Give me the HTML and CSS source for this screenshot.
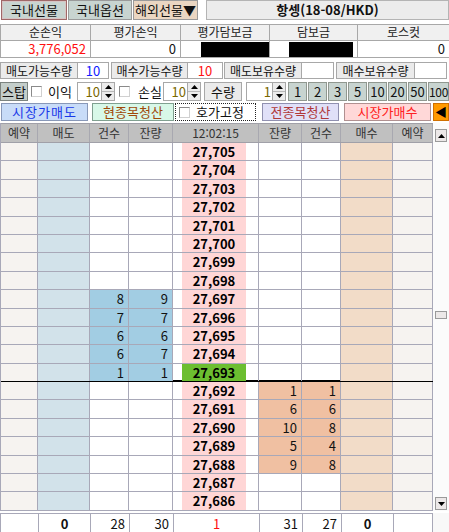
FILE: index.html
```html
<!DOCTYPE html>
<html lang="ko">
<head>
<meta charset="utf-8">
<title>항셍 호가</title>
<link rel="stylesheet" href="styles.css">
</head>
<body>
<div class="app">
  <div class="tabs">
    <div class="tab tab-active w66">국내선물</div>
    <div class="tab w64">국내옵션</div>
    <div class="tab tab-ov w65">해외선물▼</div>
    <div class="title">항셍(18-08/HKD)</div>
  </div>

  <div class="pl">
    <div class="ph">순손익</div>
    <div class="ph">평가손익</div>
    <div class="ph">평가담보금</div>
    <div class="ph">담보금</div>
    <div class="ph">로스컷</div>
    <div class="pv red">3,776,052</div>
    <div class="pv">0</div>
    <div class="pv"><div class="mask m1"></div></div>
    <div class="pv"><div class="mask m2"></div></div>
    <div class="pv">0</div>
  </div>

  <div class="qty">
    <div class="lbl w78">매도가능수량</div>
    <div class="val w31 blue">10</div>
    <div class="lbl w77 ml2">매수가능수량</div>
    <div class="val w35 red">10</div>
    <div class="lbl w78 ml1">매도보유수량</div>
    <div class="val w32"></div>
    <div class="lbl w79 ml2">매수보유수량</div>
    <div class="val w32"></div>
  </div>

  <div class="stop">
    <div class="stopbtn">스탑</div>
    <div class="chk ml3"></div>
    <div class="txt t-ik">이익</div>
    <div class="spin">
      <div class="spin-in">10</div>
      <div class="spin-btn">
        <div class="arr"><svg width="7" height="4" viewBox="0 0 7 4"><polygon points="0,4 7,4 3.5,0" fill="#000"/></svg></div>
        <div class="arr"><svg width="7" height="4" viewBox="0 0 7 4"><polygon points="0,0 7,0 3.5,4" fill="#000"/></svg></div>
      </div>
    </div>
    <div class="chk ml4"></div>
    <div class="txt t-ss">손실</div>
    <div class="spin">
      <div class="spin-in">10</div>
      <div class="spin-btn">
        <div class="arr"><svg width="7" height="4" viewBox="0 0 7 4"><polygon points="0,4 7,4 3.5,0" fill="#000"/></svg></div>
        <div class="arr"><svg width="7" height="4" viewBox="0 0 7 4"><polygon points="0,0 7,0 3.5,4" fill="#000"/></svg></div>
      </div>
    </div>
    <div class="lbl w38 ml3">수량</div>
    <div class="spin ml4 sp40">
      <div class="spin-in">1</div>
      <div class="spin-btn">
        <div class="arr"><svg width="7" height="4" viewBox="0 0 7 4"><polygon points="0,4 7,4 3.5,0" fill="#000"/></svg></div>
        <div class="arr"><svg width="7" height="4" viewBox="0 0 7 4"><polygon points="0,0 7,0 3.5,4" fill="#000"/></svg></div>
      </div>
    </div>
    <div class="nbs">
      <div class="nb">1</div>
      <div class="nb">2</div>
      <div class="nb">3</div>
      <div class="nb">5</div>
      <div class="nb">10</div>
      <div class="nb">20</div>
      <div class="nb">50</div>
      <div class="nb nb-last">100</div>
    </div>
  </div>

  <div class="acts">
    <div class="btn b-msell">시장가매도</div>
    <div class="btn b-cur">현종목청산</div>
    <div class="btn b-fix"><div class="chk"></div><span>호가고정</span></div>
    <div class="btn b-all">전종목청산</div>
    <div class="btn b-mbuy">시장가매수</div>
    <div class="btn b-arrow">◀</div>
  </div>

  <div class="board">
    <div class="grid">
      <div class="row hdr">
        <div class="c">예약</div><div class="c">매도</div><div class="c">건수</div><div class="c">잔량</div><div class="c">12:02:15</div><div class="c">잔량</div><div class="c">건수</div><div class="c">매수</div><div class="c">예약</div>
      </div>
      <div class="row"><div class="c rs"></div><div class="c sd"></div><div class="c n"></div><div class="c n"></div><div class="c pc"><div class="px">27,705</div></div><div class="c n"></div><div class="c n"></div><div class="c bd"></div><div class="c rs"></div></div>
      <div class="row"><div class="c rs"></div><div class="c sd"></div><div class="c n"></div><div class="c n"></div><div class="c pc"><div class="px">27,704</div></div><div class="c n"></div><div class="c n"></div><div class="c bd"></div><div class="c rs"></div></div>
      <div class="row"><div class="c rs"></div><div class="c sd"></div><div class="c n"></div><div class="c n"></div><div class="c pc"><div class="px">27,703</div></div><div class="c n"></div><div class="c n"></div><div class="c bd"></div><div class="c rs"></div></div>
      <div class="row"><div class="c rs"></div><div class="c sd"></div><div class="c n"></div><div class="c n"></div><div class="c pc"><div class="px">27,702</div></div><div class="c n"></div><div class="c n"></div><div class="c bd"></div><div class="c rs"></div></div>
      <div class="row"><div class="c rs"></div><div class="c sd"></div><div class="c n"></div><div class="c n"></div><div class="c pc"><div class="px">27,701</div></div><div class="c n"></div><div class="c n"></div><div class="c bd"></div><div class="c rs"></div></div>
      <div class="row"><div class="c rs"></div><div class="c sd"></div><div class="c n"></div><div class="c n"></div><div class="c pc"><div class="px">27,700</div></div><div class="c n"></div><div class="c n"></div><div class="c bd"></div><div class="c rs"></div></div>
      <div class="row"><div class="c rs"></div><div class="c sd"></div><div class="c n"></div><div class="c n"></div><div class="c pc"><div class="px">27,699</div></div><div class="c n"></div><div class="c n"></div><div class="c bd"></div><div class="c rs"></div></div>
      <div class="row"><div class="c rs"></div><div class="c sd"></div><div class="c n"></div><div class="c n"></div><div class="c pc"><div class="px">27,698</div></div><div class="c n"></div><div class="c n"></div><div class="c bd"></div><div class="c rs"></div></div>
      <div class="row"><div class="c rs"></div><div class="c sd"></div><div class="c n hs">8</div><div class="c n hs">9</div><div class="c pc"><div class="px">27,697</div></div><div class="c n"></div><div class="c n"></div><div class="c bd"></div><div class="c rs"></div></div>
      <div class="row"><div class="c rs"></div><div class="c sd"></div><div class="c n hs">7</div><div class="c n hs">7</div><div class="c pc"><div class="px">27,696</div></div><div class="c n"></div><div class="c n"></div><div class="c bd"></div><div class="c rs"></div></div>
      <div class="row"><div class="c rs"></div><div class="c sd"></div><div class="c n hs">6</div><div class="c n hs">6</div><div class="c pc"><div class="px">27,695</div></div><div class="c n"></div><div class="c n"></div><div class="c bd"></div><div class="c rs"></div></div>
      <div class="row"><div class="c rs"></div><div class="c sd"></div><div class="c n hs">6</div><div class="c n hs">7</div><div class="c pc"><div class="px">27,694</div></div><div class="c n"></div><div class="c n"></div><div class="c bd"></div><div class="c rs"></div></div>
      <div class="row mid"><div class="c rs"></div><div class="c sd"></div><div class="c n hs">1</div><div class="c n hs">1</div><div class="c pc"><div class="px cur">27,693</div></div><div class="c n"></div><div class="c n"></div><div class="c bd"></div><div class="c rs"></div></div>
      <div class="row"><div class="c rs"></div><div class="c sd"></div><div class="c n"></div><div class="c n"></div><div class="c pc"><div class="px">27,692</div></div><div class="c n hb">1</div><div class="c n hb">1</div><div class="c bd"></div><div class="c rs"></div></div>
      <div class="row"><div class="c rs"></div><div class="c sd"></div><div class="c n"></div><div class="c n"></div><div class="c pc"><div class="px">27,691</div></div><div class="c n hb">6</div><div class="c n hb">6</div><div class="c bd"></div><div class="c rs"></div></div>
      <div class="row"><div class="c rs"></div><div class="c sd"></div><div class="c n"></div><div class="c n"></div><div class="c pc"><div class="px">27,690</div></div><div class="c n hb">10</div><div class="c n hb">8</div><div class="c bd"></div><div class="c rs"></div></div>
      <div class="row"><div class="c rs"></div><div class="c sd"></div><div class="c n"></div><div class="c n"></div><div class="c pc"><div class="px">27,689</div></div><div class="c n hb">5</div><div class="c n hb">4</div><div class="c bd"></div><div class="c rs"></div></div>
      <div class="row"><div class="c rs"></div><div class="c sd"></div><div class="c n"></div><div class="c n"></div><div class="c pc"><div class="px">27,688</div></div><div class="c n hb">9</div><div class="c n hb">8</div><div class="c bd"></div><div class="c rs"></div></div>
      <div class="row"><div class="c rs"></div><div class="c sd"></div><div class="c n"></div><div class="c n"></div><div class="c pc"><div class="px">27,687</div></div><div class="c n"></div><div class="c n"></div><div class="c bd"></div><div class="c rs"></div></div>
      <div class="row"><div class="c rs"></div><div class="c sd"></div><div class="c n"></div><div class="c n"></div><div class="c pc"><div class="px">27,686</div></div><div class="c n"></div><div class="c n"></div><div class="c bd"></div><div class="c rs"></div></div>
    </div>
    <div class="sb">
      <div class="sbtn sb-up"><svg width="7" height="4" viewBox="0 0 7 4"><polygon points="0,4 7,4 3.5,0" fill="#000"/></svg></div>
      <div class="thumb"></div>
      <div class="sbtn sb-dn"><svg width="7" height="4" viewBox="0 0 7 4"><polygon points="0,0 7,0 3.5,4" fill="#000"/></svg></div>
    </div>
  </div>

  <div class="foot">
    <div class="frow">
      <div class="f"></div>
      <div class="f ctr bold">0</div>
      <div class="f rt">28</div>
      <div class="f rt">30</div>
      <div class="f ctr red">1</div>
      <div class="f rt">31</div>
      <div class="f rt">27</div>
      <div class="f ctr bold">0</div>
      <div class="f"></div>
    </div>
    <div class="fpad"></div>
  </div>
</div>
</body>
</html>
```

FILE: styles.css
```css
* { box-sizing: border-box; }
body {
  margin: 0;
  font-family: "Noto Sans CJK KR", "Noto Sans", sans-serif;
  font-size: 12px;
  color: #111;
  background: #fff;
}
.app { width: 449px; height: 532px; overflow: hidden; }

/* tabs */
.tabs { display: flex; height: 20px; padding-left: 1px; }
.tab {
  height: 20px;
  border: 1px solid #9a9a9a;
  background: #c8d4d0;
  font-size: 13px;
  line-height: 17px;
  text-align: center;
  margin-right: 1px;
  color: #111;
}
.w66 { width: 66px; }
.w64 { width: 64px; }
.w65 { width: 65px; }
.tab-active { border-color: #a06868; box-shadow: inset 0 0 0 1px #d6c4c4; }
.tab-ov { background: #ead6c2; }
.title {
  flex: 1;
  margin-left: 7px;
  background: #ececec;
  border: 1px solid #b4b4b4;
  font-weight: bold;
  font-size: 13px;
  line-height: 17px;
  text-align: center;
  color: #111;
}

/* profit/loss */
.pl {
  margin-top: 4px;
  display: grid;
  grid-template-columns: 90px 90px 89px 88px 92px;
  grid-template-rows: 16px 17px;
  border-top: 1px solid #a8a8a8;
  border-left: 1px solid #a8a8a8;
}
.ph {
  background: #f0f0f0;
  border-right: 1px solid #a8a8a8;
  border-bottom: 1px solid #a8a8a8;
  text-align: center;
  line-height: 14px;
  color: #222;
}
.pv {
  background: #fff;
  border-right: 1px solid #a8a8a8;
  border-bottom: 1px solid #a8a8a8;
  text-align: right;
  padding-right: 4px;
  line-height: 16px;
  font-size: 13px;
  display: flex;
  justify-content: flex-end;
  align-items: center;
}
.mask { background: #000; height: 15px; }
.m1 { width: 68px; margin-right: -4px; }
.m2 { width: 64px; margin-right: 0; }
.red { color: #ff1010; }
.blue { color: #1020ff; }

/* quantities */
.qty { margin-top: 4px; display: flex; height: 17px; }
.lbl {
  background: #ebebeb;
  border: 1px solid #a8a8a8;
  text-align: center;
  line-height: 15px;
  color: #111;
}
.val {
  background: #fff;
  border: 1px solid #a8a8a8;
  border-left: none;
  text-align: center;
  line-height: 15px;
  font-size: 13px;
}
.w78 { width: 78px; }
.w77 { width: 77px; }
.w79 { width: 79px; }
.w31 { width: 31px; }
.w32 { width: 32px; }
.w35 { width: 35px; }
.w38 { width: 38px; }
.ml1 { margin-left: 1px; }
.ml2 { margin-left: 2px; }
.ml3 { margin-left: 3px; }
.ml4 { margin-left: 4px; }

/* stop row */
.stop { margin-top: 3px; display: flex; height: 19px; align-items: stretch; }
.stopbtn {
  width: 28px;
  background: #c4ceca;
  border: 1px solid #7c8480;
  text-align: center;
  line-height: 17px;
  font-size: 13px;
}
.chk {
  width: 11px;
  height: 11px;
  align-self: center;
  background: #fff;
  border: 1px solid #8a8a8a;
  border-right-color: #d0d0d0;
  border-bottom-color: #d0d0d0;
}
.txt { line-height: 19px; font-size: 13px; }
.t-ik { margin-left: 6px; width: 29px; }
.t-ss { margin-left: 8px; width: 25px; }
.stop .lbl { line-height: 17px; font-size: 13px; }
.spin { display: flex; width: 38px; }
.sp40 { width: 40px; }
.spin-in {
  flex: 1;
  background: #fff;
  border: 1px solid #a8a8a8;
  text-align: right;
  color: #7a6800;
  font-size: 13px;
  line-height: 17px;
  padding-right: 1px;
}
.spin-btn {
  width: 13px;
  border: 1px solid #a8a8a8;
  border-left: none;
  background: #ececec;
  display: flex;
  flex-direction: column;
}
.arr { flex: 1; display: flex; align-items: center; justify-content: center; }
.arr + .arr { border-top: 1px solid #b8b8b8; }
.arr svg { display: block; }
.nbs { display: flex; margin-left: 2px; }
.nb {
  width: 19px;
  background: #c8d4d0;
  border: 1px solid #909890;
  margin-right: 1px;
  text-align: center;
  line-height: 17px;
  font-size: 13px;
}
.nb-last { width: 21px; margin-right: 0; font-size: 12px; letter-spacing: -0.4px; }

/* action buttons */
.acts { margin-top: 2px; display: flex; height: 18px; padding-left: 1px; }
.btn {
  height: 18px;
  border: 1px solid #8a8a8a;
  text-align: center;
  line-height: 16px;
  font-size: 13px;
}
.b-msell { width: 87px; background: #c8dcf8; border-color: #8898b8; color: #1838e8; letter-spacing: 1px; }
.b-cur { width: 82px; margin-left: 4px; background: #d8f8e8; border-color: #80a090; color: #a04808; }
.b-fix {
  width: 81px;
  margin-left: 1px;
  border: 1px dotted #222;
  display: flex;
  align-items: center;
  padding-left: 3px;
  color: #111;
}
.b-fix span { margin-left: 6px; }
.b-all { width: 77px; margin-left: 6px; background: #e0e0f8; border-color: #9090b0; color: #b03838; }
.b-mbuy { width: 87px; margin-left: 5px; background: #ffd8d8; border-color: #b09090; color: #ff2020; }
.b-arrow { flex: 1; margin-left: 2px; background: #ff9a00; border-color: #d07000; color: #000; font-size: 12px; line-height: 16px; }

/* board */
.board { margin-top: 2px; display: flex; height: 388px; }
.grid { width: 433px; border-left: 1px solid #a8a8b8; }
.row {
  display: grid;
  grid-template-columns: 37px 52px 39px 44px 86px 43px 39px 52px 40px;
  height: 18.4px;
  border-bottom: 1px solid #a8a8b8;
}
.row.hdr {
  height: 20px;
  background: #c0c0c0;
  border-top: 1px solid #a0a0a8;
  border-bottom: 1px solid #a0a0a8;
}
.hdr .c {
  text-align: center;
  line-height: 18px;
  color: #333;
  border-right-color: #a8a8b0;
}
.row.mid { border-bottom: 2px solid #000; }
.c { border-right: 1px solid #a8a8b8; line-height: 17px; }
.n { text-align: right; padding-right: 4px; font-size: 13px; }
.rs { background: #f6f3f0; }
.sd { background: #d2e2ea; }
.bd { background: #f2dcc8; }
.hs { background: #a2cde3; }
.hb { background: #f0c0a2; }
.pc { padding: 0 12px 0 9px; }
.px {
  height: 100%;
  background: #ffd6d6;
  text-align: center;
  font-weight: bold;
  font-size: 13px;
  color: #000;
}
.px.cur { background: #6cbe30; }

/* scrollbar */
.sb {
  width: 16px;
  background: #fbfbfb;
  display: flex;
  flex-direction: column;
  padding-left: 2px;
}
.sbtn {
  width: 12px;
  height: 13px;
  background: #ece8e8;
  border: 1px solid #9a9a9a;
  display: flex;
  align-items: center;
  justify-content: center;
}
.sb-up { margin-top: 6px; }
.thumb {
  width: 12px;
  height: 8px;
  margin-top: 169px;
  background: #ece8e8;
  border: 1px solid #9a9a9a;
}
.sb-dn { margin-top: auto; margin-bottom: 1px; }

/* footer */
.foot { margin-top: 2px; display: flex; height: 20px; }
.frow {
  width: 433px;
  display: grid;
  grid-template-columns: 38px 52px 39px 44px 86px 43px 39px 52px 40px;
  border: 1px solid #a8a8b8;
  border-bottom: none;
}
.f { border-right: 1px solid #a8a8b8; line-height: 19px; font-size: 13px; }
.f:last-child { border-right: none; }
.ctr { text-align: center; }
.rt { text-align: right; padding-right: 4px; }
.bold { font-weight: bold; }
.fpad { flex: 1; background: #f8f8f8; }
```
